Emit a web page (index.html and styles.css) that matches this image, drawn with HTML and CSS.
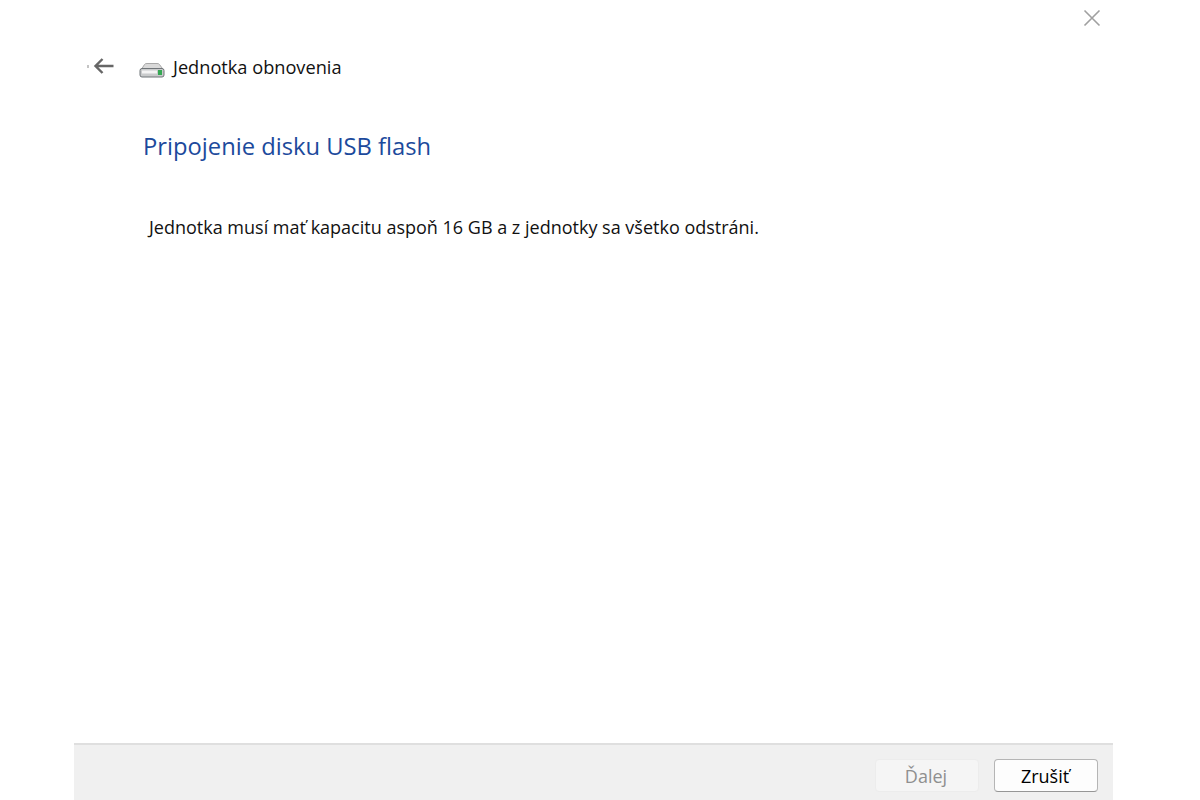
FILE: index.html
```html
<!DOCTYPE html>
<html lang="sk">
<head>
  <meta charset="UTF-8">
  <title>Jednotka obnovenia</title>
  <link rel="stylesheet" href="styles.css">
</head>
<body>
  <div class="dialog">
    <div class="close-row">
      <svg class="close-icon" width="20" height="20" viewBox="0 0 20 20">
        <path d="M2.5 2.5L17.5 17.5M17.5 2.5L2.5 17.5" stroke="#a0a0a0" stroke-width="1.6" fill="none"/>
      </svg>
    </div>
    <div class="nav-row">
      <span class="nav-dot"></span>
      <svg class="back-icon" width="24" height="20" viewBox="0 0 24 20">
        <path d="M21.5 10H3.5M10.5 3L3.5 10L10.5 17" stroke="#666" stroke-width="2.4" fill="none"/>
      </svg>
      <svg class="drive-icon" width="26" height="16" viewBox="0 0 26 16">
        <path d="M2 8L5.5 2.5Q6 1.5 8 1.5H18Q20 1.5 20.5 2.5L24.5 8Z" fill="#d9d9d9" stroke="#a8a8a8"/>
        <rect x="1" y="6.5" width="24" height="8.5" rx="2" fill="#c9cbcc" stroke="#6f7478"/>
        <rect x="3" y="8.5" width="15" height="3" fill="#f4f4f4"/>
        <rect x="19" y="8" width="4" height="5" fill="#35a853"/>
      </svg>
      <span class="nav-title">Jednotka obnovenia</span>
    </div>
    <div class="content">
      <h1>Pripojenie disku USB flash</h1>
      <p>Jednotka musí mať kapacitu aspoň 16 GB a z jednotky sa všetko odstráni.</p>
    </div>
    <div class="footer">
      <button class="btn" disabled>Ďalej</button>
      <button class="btn btn-primary">Zrušiť</button>
    </div>
  </div>
</body>
</html>
```

FILE: styles.css
```css
* {
  box-sizing: border-box;
  padding: 0;
  margin: 0;
}
html, body {
  height: 100%;
  overflow: hidden;
}
body {
  background: #fff;
  color: #111;
  font-family: "Open Sans", "Noto Sans", sans-serif;
}
.dialog {
  width: 1039px;
  height: 800px;
  margin-left: 74px;
  display: flex;
  flex-direction: column;
}
.close-row {
  height: 46px;
  display: flex;
  justify-content: flex-end;
  padding: 8px 11px 0 0;
}
.nav-row {
  height: 40px;
  display: flex;
  align-items: center;
  padding-left: 13px;
}
.nav-dot {
  width: 2px;
  height: 3px;
  background: #c4c4c4;
  margin-right: 3px;
}
.back-icon {
  margin-right: 23px;
}
.drive-icon {
  margin-top: 8px;
  margin-right: 8px;
}
.nav-title {
  font-size: 18.2px;
  line-height: 24px;
  margin-top: 1px;
}
.content {
  flex: 1;
  padding: 42px 0 0 69px;
}
h1 {
  color: #1c4a9c;
  font-size: 23.75px;
  font-weight: 400;
  line-height: 36px;
}
p {
  font-size: 18px;
  line-height: 24px;
  margin-top: 51px;
  padding-left: 6px;
}
.footer {
  height: 57px;
  background: #f0f0f0;
  border-top: 2px solid #dfdfdf;
  display: flex;
  justify-content: flex-end;
  align-items: flex-start;
  gap: 15px;
  padding: 14px 15px 0 0;
}
.btn {
  width: 104px;
  height: 33px;
  border: 1px solid #ececec;
  border-radius: 4px;
  background: #f5f5f5;
  color: #8f8f8f;
  font-family: inherit;
  font-size: 18px;
  padding-right: 2px;
}
.btn-primary {
  background: #fdfdfd;
  border-color: #b5b5b5;
  border-bottom-color: #969696;
  color: #000;
}
```
